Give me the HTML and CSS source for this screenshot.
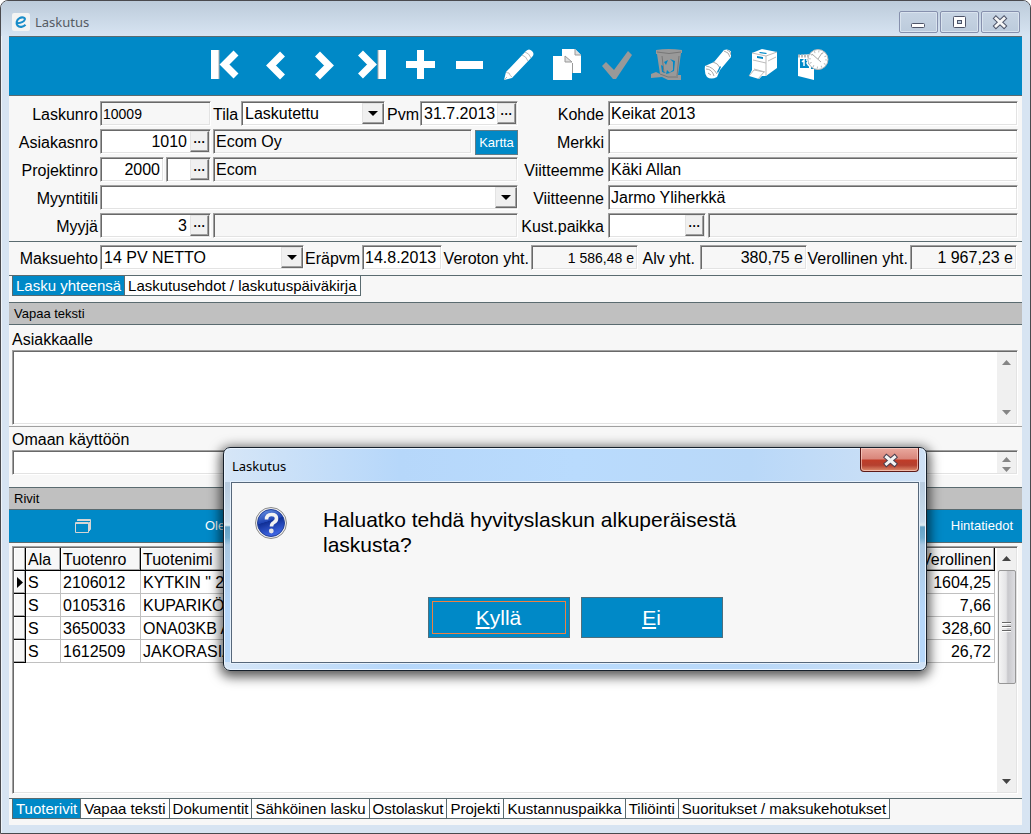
FILE: index.html
```html
<!DOCTYPE html>
<html lang="fi">
<head>
<meta charset="utf-8">
<title>Laskutus</title>
<link rel="stylesheet" href="styles.css">
</head>
<body>
<div class="window">
  <header class="titlebar">
    <svg class="app-icon" width="18" height="18" viewBox="0 0 18 18" aria-hidden="true"><rect width="18" height="18" rx="2" fill="#f4f4f3"/><path d="M5 10.2C8 10 12 9 12.800 6.500 13.300 4.500 10 3.600 7.500 5.200 4.500 7 3.800 10.500 5.500 12.500 7.500 14.800 11.500 14 13.500 11.800" fill="none" stroke="#1a8dc9" stroke-width="2.100"/></svg>
    <h1 class="title">Laskutus</h1>
    <div class="window-buttons">
      <button class="win-btn" aria-label="Pienennä"><svg width="39" height="21" viewBox="0 0 39 21"><rect x="12.500" y="11.500" width="13" height="4" rx="1" fill="#fff" stroke="#4e5468"/></svg></button>
      <button class="win-btn" aria-label="Suurenna"><svg width="39" height="21" viewBox="0 0 39 21"><rect x="13.500" y="4.500" width="12" height="11" rx="1" fill="#fff" stroke="#4e5468"/><rect x="17.500" y="8.500" width="4" height="3" fill="#b8cbdd" stroke="#4e5468"/></svg></button>
      <button class="win-btn" aria-label="Sulje"><svg width="39" height="21" viewBox="0 0 39 21"><path d="M15 6.500l8 7.500M23 6.500l-8 7.500" stroke="#4e5468" stroke-width="4.800" stroke-linecap="square"/><path d="M15 6.500l8 7.500M23 6.500l-8 7.500" stroke="#f6f6f6" stroke-width="2.800" stroke-linecap="square"/></svg></button>
    </div>
  </header>

  <main class="client">
    <nav class="toolbar" aria-label="Työkalut">
      <button class="tool" aria-label="Ensimmäinen"><svg width="32" height="32" viewBox="0 0 32 32"><path d="M2 1h8v29H2z" fill="#fff"/><path d="M10 1v29" stroke="#a8a8a8"/><path d="M27 4L15.500 15.500 27 27" fill="none" stroke="#fff" stroke-width="7"/></svg></button>
      <button class="tool" aria-label="Edellinen"><svg width="32" height="32" viewBox="0 0 32 32"><path d="M24.500 5L13 16.500 24.500 28" fill="none" stroke="#fff" stroke-width="7"/></svg></button>
      <button class="tool" aria-label="Seuraava"><svg width="32" height="32" viewBox="0 0 32 32"><path d="M10.500 5L22 16.500 10.500 28" fill="none" stroke="#fff" stroke-width="7"/></svg></button>
      <button class="tool" aria-label="Viimeinen"><svg width="32" height="32" viewBox="0 0 32 32"><path d="M22 1h8v29h-8z" fill="#fff"/><path d="M22 1v29" stroke="#a8a8a8"/><path d="M4.500 4L16 15.500 4.500 27" fill="none" stroke="#fff" stroke-width="7"/></svg></button>
      <button class="tool" aria-label="Lisää"><svg width="32" height="32" viewBox="0 0 32 32"><path d="M12 1h7v11h11v7H19v11h-7V19H1v-7h11z" fill="#fff"/></svg></button>
      <button class="tool" aria-label="Poista rivi"><svg width="32" height="32" viewBox="0 0 32 32"><path d="M2 12h27v8H2z" fill="#fff"/></svg></button>
      <button class="tool" aria-label="Muokkaa"><svg width="32" height="32" viewBox="0 0 32 32"><path d="M1 31L3 23 23 2q3-3 6 0 3 3 0 6L9 29z" fill="#fff"/><path d="M3 23q1 1 3 1 1 3 3 4M22 3q4 1 6 6M19 6q4 1 6 6M1 31l3-3" fill="none" stroke="#bbb"/></svg></button>
      <button class="tool" aria-label="Kopioi"><svg width="32" height="32" viewBox="0 0 32 32"><path d="M10 0h13l6 6v18H10z" fill="#fff"/><path d="M23 0v6h6" fill="#ddd" stroke="#999"/><path d="M1 7h12l7 7v17H1z" fill="#fff"/><path d="M13 7v6h7zM20.500 14v10" fill="#ddd" stroke="#999"/></svg></button>
      <button class="tool" aria-label="Hyväksy" disabled><svg width="32" height="32" viewBox="0 0 32 32"><path d="M1 17l4-4 8 8L27 2l4 4L15 30h-3z" fill="#999"/></svg></button>
      <button class="tool" aria-label="Poista" disabled><svg width="32" height="32" viewBox="0 0 32 32"><path d="M6 1q12-2 26 0v3h-1l-3 22h3v5H18l-6-3-11 1v-4l5-2 4 2L7 5H6z" fill="#999"/><path d="M7 3q12 3 24 0M10 25l8 3h10M29 7l-2 20M12 7l2 17" fill="none" stroke="#777"/><path d="M14 13l4-2-2 5zM11 16l2 1v5l3 2-4-1zM19 24l4-3v-8l-3-3 5 2-1 10zM17 21l-1 4 4-1" fill="#0089c7"/></svg></button>
      <button class="tool" aria-label="Etsi"><svg width="32" height="32" viewBox="0 0 32 32"><path d="M6 17l9-4L25 1q5-2 8 3l-1 4-11 13-3 7q-6 3-10 0-3-4-2-11z" fill="#fff"/><path d="M7 17q7 1 11 8M7 20q6 0 8 7M14 13q5 1 7 6M25 2q5 1 6 6M28 1q4 1 4 5M9 24l3 2" fill="none" stroke="#aaa"/><path d="M18 23l3-6 1 1-3 6z" fill="#0089c7"/></svg></button>
      <button class="tool" aria-label="Tulosta"><svg width="32" height="32" viewBox="0 0 32 32"><path d="M4 4L14 0l15 3v16l-11 8h-4l-3 3-10-3 3-6z" fill="#fff"/><path d="M4 4l14 3 11-4M18 7v20M5 11l13 3M1 27l5-6 10 2-6 7M6 20l11 3M20 12l8-4" fill="none" stroke="#bbb"/><path d="M9 7l6 1v2L9 9zM12 3l7 1-1 1-7-1z" fill="#0089c7"/></svg></button>
      <button class="tool" aria-label="Aikataulu"><svg width="32" height="32" viewBox="0 0 32 32"><path d="M1 6l16-1v26L1 27z" fill="#fff"/><path d="M3 10h9v9H3zM14 16h3v4h-3z" fill="#0089c7"/><path d="M5 13l2-2v6M9 11h3l-2 3 2 3" fill="none" stroke="#fff" stroke-width="1.500"/><path d="M1 7h11" stroke="#bbb" stroke-width="3" stroke-dasharray="2 1"/><circle cx="21" cy="10.500" r="10" fill="#fff" stroke="#bbb"/><circle cx="21" cy="10.500" r="8" fill="none" stroke="#bbb" stroke-width="2" stroke-dasharray="1 3.200"/><path d="M15 5l9 8M21 10l4-6" stroke="#aaa" fill="none"/></svg></button>
    </nav>

    <form class="form">
      <div class="form-col form-left">
        <div class="row">
          <label class="lbl" for="laskunro">Laskunro</label>
          <input class="field ro small w-code" id="laskunro" value="10009" readonly>
          <label class="mid" for="tila">Tila</label>
          <span class="field combo grow"><select id="tila"><option>Laskutettu</option></select></span>
          <label class="tight" for="pvm">Pvm</label>
          <span class="field w-date"><input id="pvm" value="31.7.2013"><button type="button" class="dots" aria-label="Valitse päivä">···</button></span>
        </div>
        <div class="row">
          <label class="lbl" for="asiakas">Asiakasnro</label>
          <span class="field w-code"><input class="num" id="asiakas" value="1010"><button type="button" class="dots" aria-label="Valitse asiakas">···</button></span>
          <input class="field ro grow" value="Ecom Oy" aria-label="Asiakkaan nimi" readonly>
          <button type="button" class="kartta">Kartta</button>
        </div>
        <div class="row">
          <label class="lbl" for="projekti">Projektinro</label>
          <input class="field num w-proj" id="projekti" value="2000">
          <span class="field w-sub"><input aria-label="Alaprojekti"><button type="button" class="dots" aria-label="Valitse projekti">···</button></span>
          <input class="field ro grow" value="Ecom" aria-label="Projektin nimi" readonly>
        </div>
        <div class="row">
          <label class="lbl" for="tili">Myyntitili</label>
          <span class="field combo grow"><select id="tili"><option></option></select></span>
        </div>
        <div class="row">
          <label class="lbl" for="myyja">Myyjä</label>
          <span class="field w-code"><input class="num" id="myyja" value="3"><button type="button" class="dots" aria-label="Valitse myyjä">···</button></span>
          <input class="field ro grow" aria-label="Myyjän nimi" readonly>
        </div>
      </div>
      <div class="form-col form-right">
        <div class="row"><label class="lbl" for="kohde">Kohde</label><input class="field grow" id="kohde" value="Keikat 2013"></div>
        <div class="row"><label class="lbl" for="merkki">Merkki</label><input class="field grow" id="merkki"></div>
        <div class="row"><label class="lbl" for="viitteemme">Viitteemme</label><input class="field grow" id="viitteemme" value="Käki Allan"></div>
        <div class="row"><label class="lbl" for="viitteenne">Viitteenne</label><input class="field grow" id="viitteenne" value="Jarmo Yliherkkä"></div>
        <div class="row"><label class="lbl" for="kust">Kust.paikka</label><span class="field w-kust"><input id="kust"><button type="button" class="dots" aria-label="Valitse kustannuspaikka">···</button></span><input class="field ro grow" aria-label="Kustannuspaikan nimi" readonly></div>
      </div>
    </form>

    <section class="totals">
      <label class="lbl" for="ehto">Maksuehto</label>
      <span class="field combo w-terms"><select id="ehto"><option>14 PV NETTO</option></select></span>
      <label class="due" for="era">Eräpvm</label>
      <input class="field w-due" id="era" value="14.8.2013">
      <label class="sum sum-net" for="veroton">Veroton yht.</label>
      <input class="field ro num small w-sum" id="veroton" value="1 586,48 e" readonly>
      <label class="sum sum-vat" for="alv">Alv yht.</label>
      <input class="field ro num w-sum" id="alv" value="380,75 e" readonly>
      <label class="sum sum-gross" for="verollinen">Verollinen yht.</label>
      <input class="field ro num w-sum" id="verollinen" value="1 967,23 e" readonly>
    </section>

    <nav class="tabs" aria-label="Laskun tiedot">
      <button class="tab active">Lasku yhteensä</button><button class="tab">Laskutusehdot / laskutuspäiväkirja</button>
    </nav>

    <h2 class="band band-text">Vapaa teksti</h2>
    <section class="notes">
      <label class="note-label" for="asiakkaalle">Asiakkaalle</label>
      <div class="memo memo-tall">
        <textarea id="asiakkaalle"></textarea>
        <div class="scroll"><svg width="9" height="5" viewBox="0 0 9 5"><path d="M0 5l4.500-5L9 5z"/></svg><svg width="9" height="5" viewBox="0 0 9 5"><path d="M0 0l4.500 5L9 0z"/></svg></div>
      </div>
    </section>
    <section class="notes own">
      <label class="note-label" for="omaan">Omaan käyttöön</label>
      <div class="memo memo-short">
        <textarea id="omaan"></textarea>
        <div class="scroll"><svg width="9" height="5" viewBox="0 0 9 5"><path d="M0 5l4.500-5L9 5z"/></svg><svg width="9" height="5" viewBox="0 0 9 5"><path d="M0 0l4.500 5L9 0z"/></svg></div>
      </div>
    </section>

    <h2 class="band band-rows">Rivit</h2>
    <div class="rowbar">
      <button class="rowbtn" aria-label="Avaa ikkuna"><svg width="18" height="16" viewBox="0 0 18 16"><path d="M3.500 3V1.500h13v10H15" fill="none" stroke="#d5d5d5"/><path d="M1.500 4.500h13v10h-13z" fill="none" stroke="#d5d5d5"/><path d="M1 5.500h14M3 2.500h14M15.500 4v9" stroke="#d5d5d5"/></svg></button>
      <button class="rowbtn">Ole</button>
      <button class="rowbtn last">Hintatiedot</button>
    </div>

    <div class="grid">
      <div class="grid-body">
        <table>
          <colgroup><col class="c-mark"><col class="c-ala"><col class="c-nro"><col><col class="c-sum"></colgroup>
          <thead><tr><th></th><th>Ala</th><th>Tuotenro</th><th>Tuotenimi</th><th class="right">Verollinen</th></tr></thead>
          <tbody>
            <tr><th scope="row" aria-label="Valittu"><svg width="6" height="11" viewBox="0 0 6 11"><path d="M0 0l6 5.500L0 11z"/></svg></th><td>S</td><td>2106012</td><td>KYTKIN " 2/</td><td class="right">1604,25</td></tr>
            <tr><th scope="row"></th><td>S</td><td>0105316</td><td>KUPARIKÖ</td><td class="right">7,66</td></tr>
            <tr><th scope="row"></th><td>S</td><td>3650033</td><td>ONA03KB A</td><td class="right">328,60</td></tr>
            <tr><th scope="row"></th><td>S</td><td>1612509</td><td>JAKORASIA</td><td class="right">26,72</td></tr>
          </tbody>
        </table>
      </div>
      <div class="grid-scroll">
        <svg width="9" height="5" viewBox="0 0 9 5"><path d="M0 5l4.500-5L9 5z"/></svg>
        <div class="thumb"></div>
        <svg width="9" height="5" viewBox="0 0 9 5"><path d="M0 0l4.500 5L9 0z"/></svg>
      </div>
    </div>

    <nav class="tabs tabs-bottom" aria-label="Rivien tiedot">
      <button class="tab active">Tuoterivit</button><button class="tab">Vapaa teksti</button><button class="tab">Dokumentit</button><button class="tab">Sähköinen lasku</button><button class="tab">Ostolaskut</button><button class="tab">Projekti</button><button class="tab">Kustannuspaikka</button><button class="tab">Tiliöinti</button><button class="tab">Suoritukset / maksukehotukset</button>
    </nav>
  </main>

  <div class="dialog" role="dialog" aria-labelledby="dlg-title">
    <div class="dlg-bar">
      <h2 class="dlg-title" id="dlg-title">Laskutus</h2>
      <button class="dlg-close" aria-label="Sulje"><svg width="20" height="16" viewBox="0 0 20 16"><path d="M6.500 5l8 7M14.500 5l-8 7" stroke="#4b4050" stroke-width="5" stroke-linecap="square"/><path d="M6.500 5l8 7M14.500 5l-8 7" stroke="#f4f4f4" stroke-width="3" stroke-linecap="square"/></svg></button>
    </div>
    <div class="dlg-body">
      <div class="dlg-text">
        <svg class="dlg-icon" width="32" height="32" viewBox="0 0 32 32" aria-hidden="true">
          <defs><linearGradient id="q" x1="0" y1="0" x2="0.300" y2="1"><stop offset="0" stop-color="#6f9be8"/><stop offset=".5" stop-color="#1f44b4"/><stop offset=".52" stop-color="#102f95"/><stop offset="1" stop-color="#3c63e0"/></linearGradient></defs>
          <circle cx="16" cy="16" r="15.500" fill="#eee" stroke="#8a8a8a"/><circle cx="16" cy="16" r="13.500" fill="url(#q)" stroke="#23409a"/>
          <path d="M11.500 12.500q0-5 5-5 5 0 5 4 0 2.500-2.700 4-2.300 1.200-2.300 4" fill="none" stroke="#f2f2f2" stroke-width="3.600"/><circle cx="16.300" cy="24" r="2.400" fill="#e6e6e6"/>
        </svg>
        <p class="dlg-msg">Haluatko tehdä hyvityslaskun alkuperäisestä laskusta?</p>
      </div>
      <div class="dlg-actions">
        <button class="dlg-btn focused"><span><u>K</u>yllä</span></button>
        <button class="dlg-btn"><span><u>E</u>i</span></button>
      </div>
    </div>
  </div>
</div>
</body>
</html>
```
FILE: styles.css
```css
* { box-sizing: border-box; }
html, body { height: 100%; }
body {
  margin: 0;
  font: 16px/20px "Liberation Sans", Arial, sans-serif;
  color: #000;
  background: #fff;
}
button, input, select, textarea { font: inherit; color: inherit; margin: 0; border-radius: 0; }
button { padding: 0; }
h1, h2, p { margin: 0; font-weight: normal; }

/* Window frame */
.window {
  position: relative;
  display: flex;
  flex-direction: column;
  min-height: 100%;
  padding: 0 8px 8px;
  border: 1px solid #4a4a4e;
  border-radius: 8px 8px 0 0;
  background: #d7e4f2;
  box-shadow: inset 1px 1px #eef4fa;
}
.titlebar {
  display: flex;
  align-items: center;
  gap: 5px;
  height: 35px;
  margin: 0 -8px;
  padding: 7px 10px 0 11px;
  border-radius: 7px 7px 0 0;
  background: linear-gradient(#bccbda, #d7e4f2);
}
.title { flex: 1; font: 13px/18px "Noto Sans", "Open Sans", sans-serif; color: #555b63; }
.window-buttons { display: flex; gap: 2px; }
.win-btn {
  width: 39px;
  height: 22px;
  border: 1px solid #8690ad;
  border-radius: 2px;
  background: linear-gradient(#c7d4e3, #bccbdc);
  box-shadow: inset 0 0 0 1px #d9e3ee;
}
.win-btn svg { display: block; margin: 0 -1px; }

.client { flex: 1; display: flex; flex-direction: column; background: #f7f7f7; }

/* Toolbar */
.toolbar {
  display: flex;
  justify-content: center;
  align-items: center;
  height: 60px;
  padding: 0 0 2px 6px;
  background: #0089c7;
  border: solid #5a6b70;
  border-width: 1px 0;
}
.tool { width: 49px; height: 32px; border: 0; background: none; }
.tool svg { display: block; margin: 0 auto; }

/* Form */
.form { display: flex; padding: 5px 4px 3px 0; }
.form-col { display: flex; flex-direction: column; gap: 3px; min-width: 0; }
.form-left { flex: 0 1 509px; }
.form-right { flex: 1; }
.row { display: flex; gap: 2px; height: 25px; }
.row label, .totals label { padding-top: 4px; white-space: nowrap; }
.lbl { width: 89px; flex: none; text-align: right; }
.form-right .lbl { width: 87px; padding-right: 1px; margin-right: 1px; }
.mid { width: 26px; }
.tight { width: 31px; }
.field {
  display: flex;
  min-width: 0;
  height: 25px;
  padding: 1px 3px 1px 2px;
  border: 1px solid;
  border-color: #a0a0a0 #fff #fff #a0a0a0;
  box-shadow: inset 1px 1px #696969, inset -1px -1px #e3e3e3;
  background: #fff;
}
input.field { width: 0; }
.field input { flex: 1; width: 0; min-width: 0; border: 0; padding: 0 3px 0 1px; background: none; outline: 0; }
.field.grow, .grow { flex: 1; }
.ro { background: #f7f7f7; }
.small { font-size: 14px; }
.num { text-align: right; }
input.w-code, .w-code { flex: none; width: 111px; }
.w-date { width: 98px; flex: none; }
.w-date input { padding-right: 0; }
input.w-proj { width: 64px; flex: none; }
.w-sub { width: 45px; flex: none; }
.w-kust { width: 98px; flex: none; }
.dots {
  align-self: stretch;
  width: 19px;
  margin: 0 -2px 0 0;
  flex: none;
  border: 1px solid;
  border-color: #e3e3e3 #696969 #696969 #e3e3e3;
  box-shadow: inset -1px -1px #a0a0a0;
  background: #f0f0f0;
  font-weight: bold;
  font-size: 12px;
  line-height: 18px;
}
.combo { position: relative; padding: 1px; }
.combo select { appearance: none; flex: 1; border: 0; padding: 1px 20px 0 2px; background: none; outline: 0; }
.combo::before, .combo::after { content: ""; position: absolute; pointer-events: none; }
.combo::before {
  top: 1px;
  right: 0;
  bottom: 1px;
  width: 20px;
  border: 1px solid;
  border-color: #e3e3e3 #696969 #696969 #e3e3e3;
  box-shadow: inset -1px -1px #a0a0a0;
  background: #f0f0f0;
}
.combo::after { top: 9px; right: 6px; border: solid transparent; border-width: 5px 5px 0; border-top-color: #000; }
.kartta {
  flex: none;
  width: 43px;
  height: 25px;
  margin: 1px 0 0 1px;
  border: 1px solid #5f7c88;
  background: #0089c7;
  color: #fff;
  font-size: 13px;
}

.totals {
  display: flex;
  height: 35px;
  padding: 3px 5px 0 0;
  border: solid #5a6b70;
  border-width: 1px 0;
}
.totals .lbl { width: 89px; margin-right: 2px; }
.totals .w-terms { width: 204px; }
.totals .due { padding-left: 1px; width: 58px; }
.totals .w-due { width: 80px; }
.totals .sum { text-align: right; padding-right: 2px; }
.totals .sum-net { width: 89px; }
.totals .sum-vat { width: 62px; padding-right: 5px; }
.totals .sum-gross { flex: 1; }
.totals .w-sum { width: 107px; }

/* Tabs */
.tabs { display: flex; padding: 0 3px; }
.tab {
  height: 20px;
  padding: 0 3px;
  border: solid #5a6b70;
  border-width: 0 1px 1px 0;
  background: #fff;
  font-size: 15px;
  line-height: 18px;
  white-space: nowrap;
}
.tab.active { background: #0089c7; color: #fff; border-left-width: 1px; }
.tabs-bottom { margin: 4px 0 6px; border-top: 1px solid #5a6b70; }

/* Section bands */
.band {
  height: 23px;
  padding-left: 5px;
  background: #c0c0c0;
  border: solid #5a6b70;
  border-width: 1px 0;
  font-size: 13px;
  line-height: 21px;
}
.band-text { margin-top: 6px; }
.band-rows { margin-top: 12px; border-bottom: 0; height: 22px; }

.notes { padding: 0 4px 1px 3px; }
.own { border-top: 1px solid #a0a0a0; padding-bottom: 0; }
.note-label { display: block; height: 25px; padding-top: 5px; }
.own .note-label { height: 23px; padding-top: 3px; }
.memo {
  display: flex;
  padding: 1px;
  border: 1px solid;
  border-color: #a0a0a0 #fff #fff #a0a0a0;
  box-shadow: inset 1px 1px #696969, inset -1px -1px #e3e3e3;
  background: #fff;
}
.memo-tall { height: 75px; }
.memo-short { height: 25px; }
.memo textarea { flex: 1; border: 0; padding: 0 2px; resize: none; background: none; overflow: hidden; outline: 0; }
.scroll {
  display: flex;
  flex-direction: column;
  justify-content: space-between;
  align-items: center;
  width: 19px;
  padding: 8px 0;
  background: #f0f0f0;
  fill: #858585;
}
.memo-short .scroll { padding: 5px 0 1px; }

.rowbar {
  display: flex;
  height: 34px;
  padding-right: 1px;
  background: #0089c7;
  border: solid #5a6b70;
  border-width: 1px 0;
  color: #fff;
}
.rowbtn { width: 147px; border: 0; background: none; font-size: 13px; text-align: center; }
.rowbtn:nth-child(2) { width: 118px; }
.rowbtn svg { display: block; margin: 0 auto; }
.rowbtn.last { width: auto; margin-left: auto; padding: 0 8px; }

/* Invoice rows */
.grid {
  flex: 1;
  display: flex;
  margin: 3px 4px 0 3px;
  padding: 1px;
  border: 1px solid;
  border-color: #a0a0a0 #fff #fff #a0a0a0;
  box-shadow: inset 1px 1px #696969, inset -1px -1px #e3e3e3;
  background: #fff;
}
.grid-body { flex: 1; min-width: 0; }
table { width: calc(100% - 2px); table-layout: fixed; border-collapse: separate; border-spacing: 0; }
.c-mark { width: 12px; }
.c-ala { width: 35px; }
.c-nro { width: 80px; }
.c-sum { width: 76px; }
th, td { height: 23px; padding: 1px 2px 0; font-weight: normal; text-align: left; white-space: nowrap; overflow: hidden; line-height: 21px; }
td { border: solid #c0c0c0; border-width: 0 1px 1px 0; }
th { background: #f7f7f7; border: solid #000; border-width: 0 1px 1px 0; box-shadow: inset -1px -1px #a8a8a8, inset 1px 1px #fff; }
tbody th svg { display: block; margin-left: 1px; }
.right { text-align: right; padding-right: 3px; }
.grid-scroll {
  display: flex;
  flex-direction: column;
  align-items: center;
  width: 19px;
  padding: 8px 0;
  background: #f0f0f0;
  fill: #444;
}
.thumb {
  width: 18px;
  height: 114px;
  margin: 9px 0 auto;
  border: 1px solid #979797;
  border-radius: 2px;
  background:
    repeating-linear-gradient(#666 0 1px, #fff 1px 2px, transparent 2px 4px) center / 9px 10px no-repeat,
    linear-gradient(90deg, #f5f5f5, #e4e4e6 45%, #c8c8cc 55%, #dcdce0);
}

/* Confirmation dialog */
.dialog {
  position: absolute;
  top: 446px;
  left: 222px;
  width: 704px;
  padding: 0 7px 7px;
  border: 1px solid #16202b;
  border-radius: 7px;
  background: linear-gradient(90deg, #d6e6f7, #b6d7fa 25%, #b9dbfd 50%, #b9d8f8 75%, #cfe1f5);
  box-shadow: inset 0 0 0 1px #eaf4ff, 0 3px 12px 3px rgba(0, 0, 0, 0.65);
}
.dialog::before, .dialog::after {
  content: "";
  position: absolute;
  top: 34px;
  bottom: 8px;
  width: 5px;
  background: linear-gradient(#b8cbdf 0, #c9dcec 22%, #ddebf1 24%, #64a2c6 25%, #72adcf 31%, #abc8e2 35%, #b6d7fa 70%, #b6d7fa);
}
.dialog::before { left: 1px; }
.dialog::after { right: 1px; }
.dlg-bar { display: flex; justify-content: space-between; height: 34px; }
.dlg-title { padding: 8px 0 0 1px; font: 13px/20px "Noto Sans", "Open Sans", sans-serif; }
.dlg-close {
  width: 59px;
  height: 24px;
  border: 1px solid #5d1a18;
  border-top: 0;
  border-radius: 0 0 4px 4px;
  background: linear-gradient(#e9a99f, #d9857a 48%, #c03c28 52%, #b5402f 75%, #df8e70);
  box-shadow: inset 0 0 0 1px rgba(255, 220, 210, 0.6);
}
.dlg-close svg { display: block; margin: 0 auto; }
.dlg-body {
  position: relative;
  padding: 24px 23px;
  border: 1px solid #56677a;
  background: #f7f7f7;
  box-shadow: 0 0 0 1px #e4f0fc;
}
.dlg-text { display: flex; gap: 36px; }
.dlg-icon { flex: none; }
.dlg-msg { max-width: 420px; font-size: 21px; line-height: 25px; }
.dlg-actions { display: flex; justify-content: center; gap: 11px; margin-top: 40px; }
.dlg-btn {
  width: 142px;
  height: 41px;
  padding: 3px;
  border: 1px solid #4d6f7e;
  background: #0089c7;
  color: #fff;
  font-size: 21px;
}
.dlg-btn span { display: flex; align-items: center; justify-content: center; height: 100%; border: 1px solid transparent; }
.dlg-btn.focused span { border-color: #f08040; }
.dlg-btn u { text-underline-offset: 2px; }
```
